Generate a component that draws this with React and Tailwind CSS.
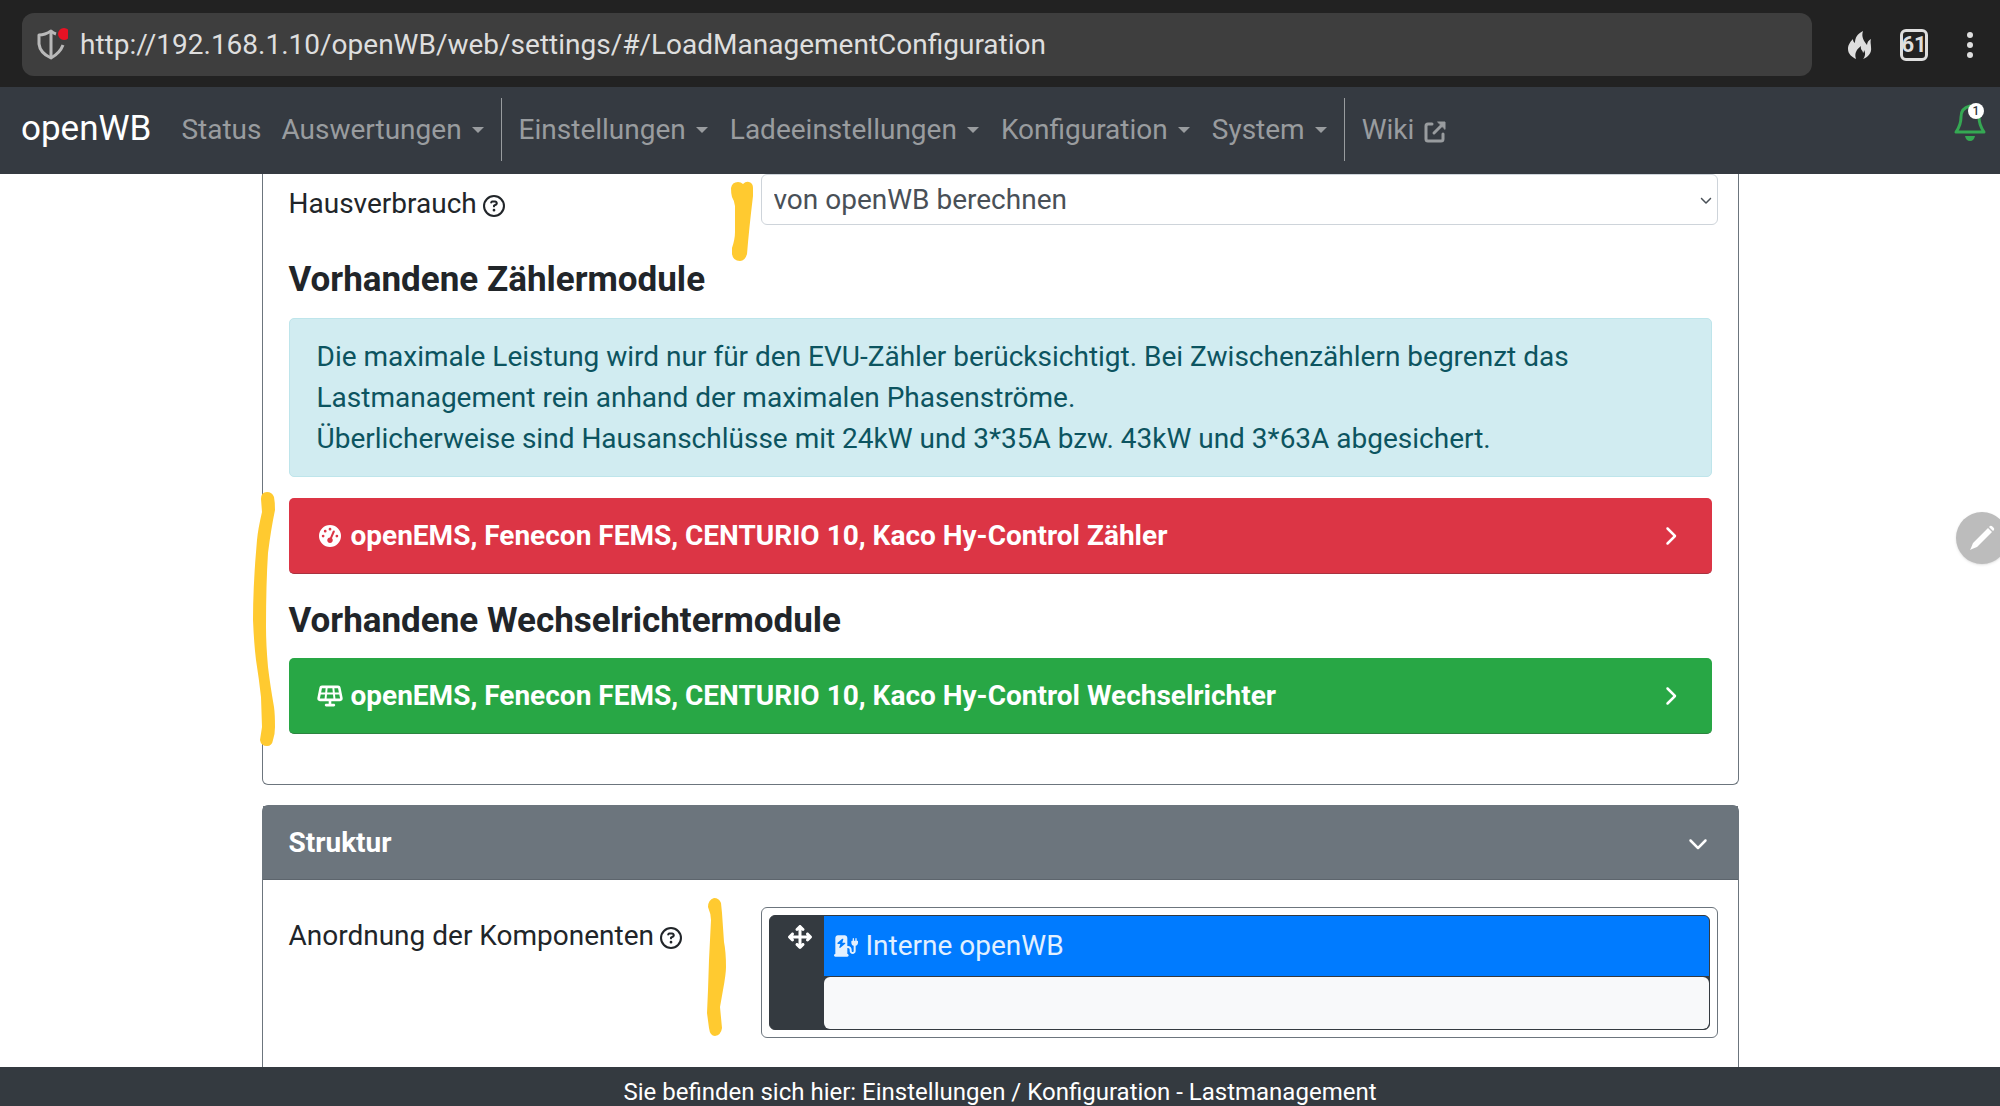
import { FaRegCircleQuestion, FaGaugeHigh, FaSolarPanel, FaChargingStation, FaArrowsUpDownLeftRight, FaChevronRight, FaChevronDown } from "react-icons/fa6";

const menus = ["Einstellungen", "Ladeeinstellungen", "Konfiguration", "System"];

function Caret() {
  return <span className="ml-[10px] border-x-6 border-t-6 border-x-transparent border-t-current" />;
}

function MenuButton({ children }) {
  return (
    <button className="flex items-center whitespace-nowrap">
      {children}
      <Caret />
    </button>
  );
}

function BrowserBar() {
  return (
    <div className="flex h-[87px] shrink-0 items-center bg-[#222222] pt-[2px] pl-[22px] text-[#dedede]">
      <div className="flex h-[63px] min-w-0 flex-1 items-center gap-3 rounded-xl bg-[#3e3e3e] pl-[14px]">
        <svg viewBox="0 0 32 36" className="h-9 w-8 shrink-0" fill="none" stroke="#b9b9b9" strokeWidth="3" aria-hidden="true">
          <path d="M20 7Q17 6 15 4Q9 8 3 8V17Q4 26 15 31Q24 26 27 18" strokeLinejoin="round" />
          <path d="M15 5V31" />
          <circle cx="28" cy="7" r="6" fill="#e81224" stroke="none" />
        </svg>
        <input
          aria-label="Adresse"
          defaultValue="http://192.168.1.10/openWB/web/settings/#/LoadManagementConfiguration"
          className="min-w-0 flex-1 bg-transparent text-[28px] outline-none"
        />
      </div>
      <div className="flex items-center pl-9">
        <button aria-label="Daten löschen">
          <svg viewBox="0 0 24 28" className="h-7 w-6" fill="currentColor" aria-hidden="true">
            <path d="M15 0C9 3 7 7 7 12C5 11 5 9 5 8C1 12 0 15 0 18C0 23 4 26 8 28C6 22 9 18 13 15C12 19 15 19 15 22C16 21 16 20 16 19C18 22 17 26 15 28C20 26 24 22 23 16C23 13 22 11 23 8C21 9 19 11 19 14C16 10 13 6 15 0Z" />
          </svg>
        </button>
        <button aria-label="61 Tabs" className="ml-7 flex h-8 w-7 items-center justify-center rounded-md border-3 border-current text-[22px] font-bold">
          61
        </button>
        <button aria-label="Menü" className="mr-6 ml-9 flex w-3 flex-col items-center gap-1">
          <span className="size-[6px] rounded-full bg-current" />
          <span className="size-[6px] rounded-full bg-current" />
          <span className="size-[6px] rounded-full bg-current" />
        </button>
      </div>
    </div>
  );
}

function NavBar() {
  return (
    <nav className="flex h-[87px] shrink-0 items-center bg-[#353a41] pr-3 pb-[2px] pl-[21px] text-[28px] text-[#999c9f]">
      <a href="#home" className="text-[35px] text-white">openWB</a>
      <a href="#status" className="ml-[30px]">Status</a>
      <div className="ml-5 flex"><MenuButton>Auswertungen</MenuButton></div>
      <span className="mx-[17px] h-[63px] w-px bg-[#999c9f]" />
      <div className="flex gap-[22px]">
        {menus.map((m) => <MenuButton key={m}>{m}</MenuButton>)}
      </div>
      <span className="mx-[17px] h-[63px] w-px bg-[#999c9f]" />
      <a href="#wiki" className="flex items-center gap-[10px]">
        Wiki
        <svg viewBox="0 0 22 22" className="mt-1 size-[22px]" fill="none" stroke="currentColor" strokeWidth="3" strokeLinecap="round" strokeLinejoin="round" aria-hidden="true">
          <path d="M8 3H4Q2 3 2 5V18Q2 20 4 20H17Q19 20 19 18V13M10 12L18 4" />
          <path d="M14 1H21V8Z" fill="currentColor" strokeWidth="1" />
        </svg>
      </a>
      <button aria-label="Benachrichtigungen" className="relative mr-px ml-auto -mt-4 text-[#35a853]">
        <svg viewBox="0 0 34 38" className="h-[38px] w-[34px]" fill="none" aria-hidden="true">
          <path d="M17 3Q8 5 8 14Q8 22 3 29H31Q26 22 26 14Q26 5 17 3Z" stroke="currentColor" strokeWidth="3" strokeLinejoin="round" />
          <path d="M12 33H22Q21 38 17 38Q13 38 12 33Z" fill="currentColor" />
        </svg>
        <span className="absolute top-0 right-[3px] flex size-4 items-center justify-center rounded-full bg-white text-xs font-medium text-[#343a40]">1</span>
      </button>
    </nav>
  );
}

function ModuleButton({ icon: Icon, color, children }) {
  return (
    <button className={`flex h-[76px] w-full items-center gap-2 rounded-[5px] border-b px-7 text-left font-bold text-white ${color}`}>
      <Icon className="w-[26px] shrink-0 text-[22px]" />
      <span className="flex-1">{children}</span>
      <FaChevronRight className="mr-1 text-[20px]" />
    </button>
  );
}

function MarkerStrokes() {
  return (
    <svg viewBox="0 0 520 880" className="pointer-events-none absolute top-0 -left-3 h-[880px] w-[520px]" fill="#ffca30" aria-hidden="true">
      <path d="M481 14Q482 8 488 8Q491 8 493 10Q496 7 499 8Q503 9 503 14V22Q499 55 497 80Q495 87 490 87Q483 87 482 80V74Q485 65 485 58V32Q484 26 482 23Q481 20 481 14Z" />
      <path d="M17 318Q11 318 11 325L12 338Q8 355 7 366Q3 410 3 446Q4 470 6 486Q9 505 11 523L12 553L10 566Q11 572 17 572Q22 572 23 566Q25 560 25 553Q25 540 24 533Q20 510 18 493Q16 470 16 453Q16 410 18 379Q21 355 25 336Q25 328 24 323Q22 318 17 318Z" />
      <path d="M464 724Q458 726 458 733Q461 740 461 746L459 786L458 816L457 839L459 854Q460 862 465 862Q471 861 472 854L470 833L473 816Q476 800 476 793Q476 778 474 768L472 739L471 729Q469 724 464 724Z" />
    </svg>
  );
}

export default function App() {
  return (
    <div className="relative flex h-screen flex-col overflow-hidden bg-white font-[Roboto,sans-serif] text-[28px] text-[#212529]">
      <BrowserBar />
      <NavBar />
      <main className="relative mx-auto min-h-0 w-[73.85%] flex-1">
        <section className="h-[611px] rounded-b-md border-x border-b border-[#6c757d] pl-[26px]">
          <div className="flex pr-5">
            <label htmlFor="haus" className="flex w-[472px] shrink-0 items-center gap-[6px] pt-2">
              Hausverbrauch <FaRegCircleQuestion className="mt-1 text-[22px]" />
            </label>
            <div className="relative flex-1">
              <select id="haus" className="h-[51px] w-full appearance-none rounded-md border border-[#ced4da] bg-white px-3 text-[#495057]">
                <option>von openWB berechnen</option>
              </select>
              <FaChevronDown className="pointer-events-none absolute top-5 right-[6px] text-[12px] text-[#495057]" />
            </div>
          </div>
          <div className="pr-[26px]">
            <h2 className="mt-[34px] text-[35px] leading-[42px] font-bold">Vorhandene Zählermodule</h2>
            <div className="mt-[17px] rounded-[5px] border border-[#bee5eb] bg-[#d1ecf1] px-[27px] py-[17px] leading-[41px] text-[#0c5460]">
              Die maximale Leistung wird nur für den EVU-Zähler berücksichtigt. Bei Zwischenzählern begrenzt das Lastmanagement rein anhand der maximalen Phasenströme.
              <br />
              Überlicherweise sind Hausanschlüsse mit 24kW und 3*35A bzw. 43kW und 3*63A abgesichert.
            </div>
            <div className="mt-[21px]">
              <ModuleButton icon={FaGaugeHigh} color="bg-[#dc3545] border-[#a83240]">openEMS, Fenecon FEMS, CENTURIO 10, Kaco Hy-Control Zähler</ModuleButton>
            </div>
            <h2 className="mt-[26px] text-[35px] leading-[42px] font-bold">Vorhandene Wechselrichtermodule</h2>
            <div className="mt-4">
              <ModuleButton icon={FaSolarPanel} color="bg-[#28a745] border-[#2c8440]">openEMS, Fenecon FEMS, CENTURIO 10, Kaco Hy-Control Wechselrichter</ModuleButton>
            </div>
          </div>
        </section>
        <section className="mt-5 h-[400px] rounded-t-md border border-[#6c757d]">
          <button className="flex h-[74px] w-full items-center justify-between border-b border-[#5d656d] bg-[#6c757d] pr-[30px] pl-[26px] font-bold text-white">
            Struktur <FaChevronDown className="text-[20px]" />
          </button>
          <div className="flex pt-[27px] pr-5 pl-[26px]">
            <div className="flex h-[58px] w-[472px] shrink-0 items-center gap-[6px]">
              Anordnung der Komponenten <FaRegCircleQuestion className="mt-1 text-[22px]" />
            </div>
            <div className="flex-1 rounded-md border border-[#6c757d] p-[7px]">
              <div className="flex h-[115px] overflow-hidden rounded-md border border-[#343a40] bg-[#343a40]">
                <button aria-label="Verschieben" className="flex w-[54px] items-start pt-[9px] pl-[18px] text-white">
                  <FaArrowsUpDownLeftRight className="text-[24px]" />
                </button>
                <div className="flex flex-1 flex-col">
                  <div className="flex h-[60px] items-center gap-2 bg-[#007bff] px-[10px] text-[#e2f0ff]">
                    <FaChargingStation className="w-6 text-[22px]" /> Interne openWB
                  </div>
                  <div className="mt-px flex-1 rounded-md bg-[#f8f9fa]" />
                </div>
              </div>
            </div>
          </div>
        </section>
        <MarkerStrokes />
      </main>
      <button aria-label="Bearbeiten" className="absolute top-[512px] -right-2 flex size-[52px] items-center justify-center rounded-full bg-[#bcbcbc] shadow-sm">
        <svg viewBox="0 0 26 26" className="size-[26px]" fill="white" aria-hidden="true">
          <path d="M19 3L23 7L8 22L3 24L1 25L2 23L4 18ZM20 2L21 1Q22 0 24 2Q26 4 25 5L24 6Z" />
        </svg>
      </button>
      <footer className="z-10 h-[39px] shrink-0 bg-[#343a40] pt-[11px] text-center text-[24px] leading-[28px] text-white">
        Sie befinden sich hier: Einstellungen / Konfiguration - Lastmanagement
      </footer>
    </div>
  );
}
